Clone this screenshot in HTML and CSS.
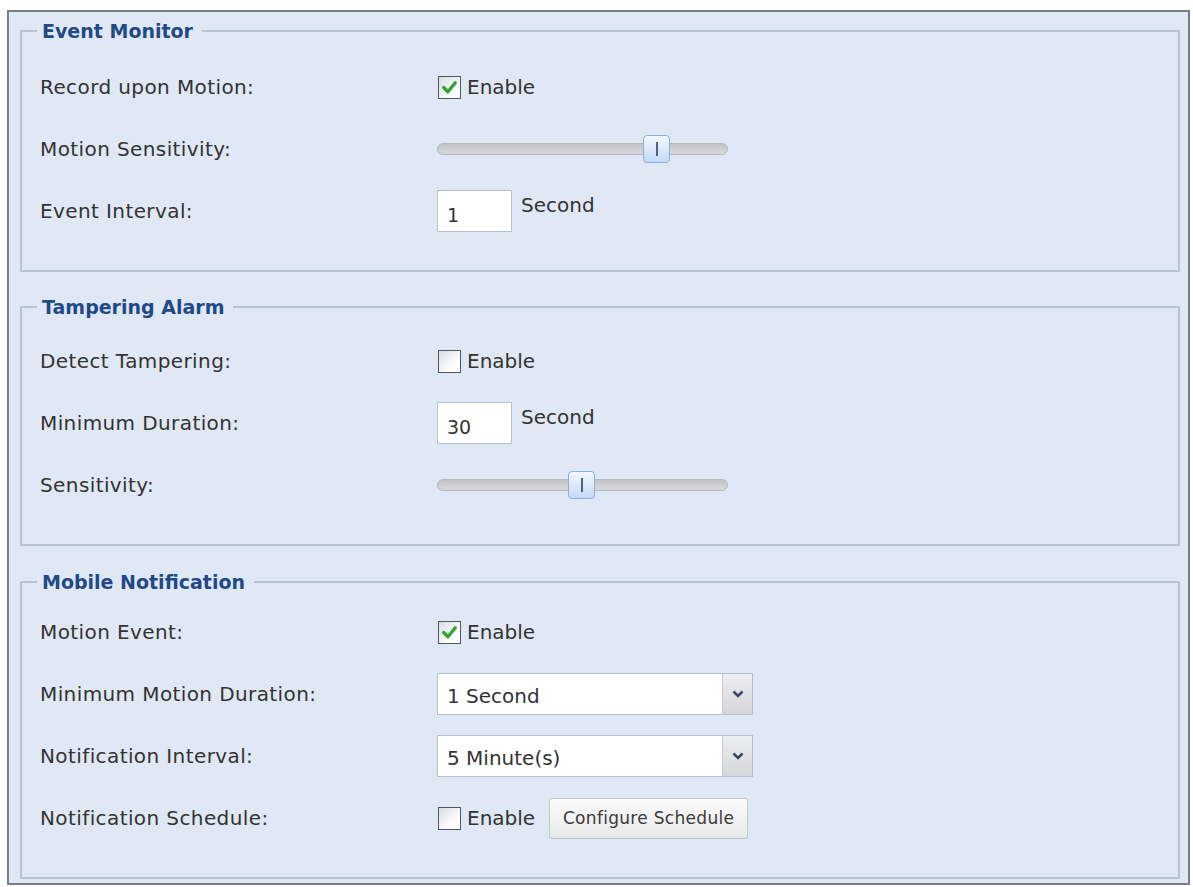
FILE: index.html
```html
<!DOCTYPE html>
<html>

<head>
    <meta charset="UTF-8" />
    <title>Event Settings</title>
    <link rel="stylesheet" href="styles.css">
</head>

<body>
    <div class="panel">
        <fieldset class="group group-event">
            <legend>Event Monitor</legend>
            <div class="row">
                <div class="label">Record upon Motion:</div>
                <div class="field">
                    <span class="check checked"><svg viewBox="0 0 20 20"><path d="M4.5 10 L8.5 14 L15.5 5.5" /></svg></span>
                    <span class="check-text">Enable</span>
                </div>
            </div>
            <div class="row">
                <div class="label">Motion Sensitivity:</div>
                <div class="field">
                    <div class="slider"><span class="thumb" style="left: 205px"></span></div>
                </div>
            </div>
            <div class="row">
                <div class="label">Event Interval:</div>
                <div class="field">
                    <div class="textbox">1</div>
                    <span class="unit">Second</span>
                </div>
            </div>
        </fieldset>

        <fieldset class="group group-tamper">
            <legend>Tampering Alarm</legend>
            <div class="row">
                <div class="label">Detect Tampering:</div>
                <div class="field">
                    <span class="check"></span>
                    <span class="check-text">Enable</span>
                </div>
            </div>
            <div class="row">
                <div class="label">Minimum Duration:</div>
                <div class="field">
                    <div class="textbox">30</div>
                    <span class="unit">Second</span>
                </div>
            </div>
            <div class="row">
                <div class="label">Sensitivity:</div>
                <div class="field">
                    <div class="slider"><span class="thumb" style="left: 130px"></span></div>
                </div>
            </div>
        </fieldset>

        <fieldset class="group group-mobile">
            <legend>Mobile Notification</legend>
            <div class="row">
                <div class="label">Motion Event:</div>
                <div class="field">
                    <span class="check checked"><svg viewBox="0 0 20 20"><path d="M4.5 10 L8.5 14 L15.5 5.5" /></svg></span>
                    <span class="check-text">Enable</span>
                </div>
            </div>
            <div class="row">
                <div class="label">Minimum Motion Duration:</div>
                <div class="field">
                    <div class="select">
                        <span class="select-value">1 Second</span>
                        <span class="select-arrow"><svg viewBox="0 0 12 8"><path d="M1.5 1.5 L6 6 L10.5 1.5" /></svg></span>
                    </div>
                </div>
            </div>
            <div class="row">
                <div class="label">Notification Interval:</div>
                <div class="field">
                    <div class="select">
                        <span class="select-value">5 Minute(s)</span>
                        <span class="select-arrow"><svg viewBox="0 0 12 8"><path d="M1.5 1.5 L6 6 L10.5 1.5" /></svg></span>
                    </div>
                </div>
            </div>
            <div class="row">
                <div class="label">Notification Schedule:</div>
                <div class="field">
                    <span class="check"></span>
                    <span class="check-text">Enable</span>
                    <button class="btn">Configure Schedule</button>
                </div>
            </div>
        </fieldset>
    </div>
</body>

</html>
```

FILE: styles.css
```css
body {
    margin: 0;
    background-color: #ffffff;
    font-family: "DejaVu Sans", Verdana, sans-serif;
    color: #333333;
}

.panel {
    margin: 10px 3px 0 7px;
    height: 863px;
    border: 2px solid #7b7d80;
    background-color: #dfe8f4;
    padding: 8px 8px 0 11px;
}

.group {
    margin: 0;
    padding: 0 0 28px 18px;
    border: 2px solid #b9c4cf;
    border-radius: 1px;
}

.group-tamper {
    margin-top: 24px;
}

.group-mobile {
    margin-top: 25px;
}

.group-event .row:first-of-type {
    margin-top: 14px;
}

.group-tamper .row:first-of-type {
    margin-top: 12px;
}

.group-mobile .row:first-of-type {
    margin-top: 8px;
}

legend {
    margin-left: -3px;
    padding: 0 9px 0 5px;
    line-height: 22px;
    font-size: 19px;
    font-weight: bold;
    color: #1f4a87;
}

.row {
    display: flex;
    align-items: center;
    height: 62px;
}

.label {
    width: 397px;
    font-size: 20px;
    letter-spacing: 0.4px;
}

.field {
    display: flex;
    align-items: center;
}

.check {
    width: 21px;
    height: 21px;
    border: 1px solid #4e5865;
    background: linear-gradient(135deg, #d8dde3, #ffffff 70%);
    margin-left: 1px;
    display: inline-flex;
}

.check svg {
    width: 21px;
    height: 21px;
}

.check svg path {
    fill: none;
    stroke: #33a332;
    stroke-width: 3.2;
    stroke-linecap: round;
    stroke-linejoin: round;
}

.check-text {
    margin-left: 6px;
    font-size: 20px;
}

.slider {
    position: relative;
    width: 289px;
    height: 10px;
    border: 1px solid #b4b8bc;
    border-radius: 6px;
    background: linear-gradient(#c2c5c8, #d8dadc);
}

.thumb {
    position: absolute;
    top: -9px;
    width: 25px;
    height: 26px;
    border: 1px solid #8eaedb;
    border-radius: 4px;
    background: linear-gradient(#f3f8ff, #c5daf6);
}

.thumb::after {
    content: "";
    position: absolute;
    left: 12px;
    top: 6px;
    width: 2px;
    height: 14px;
    background-color: #51627c;
}

.textbox {
    width: 64px;
    height: 40px;
    padding: 0 0 0 9px;
    border: 1px solid #b8c0ca;
    background-color: #ffffff;
    font-size: 19px;
    line-height: 48px;
    box-sizing: content-box;
}

.unit {
    margin-left: 9px;
    font-size: 20px;
    align-self: flex-start;
    margin-top: 3px;
}

.select {
    display: flex;
    width: 314px;
    height: 40px;
    border: 1px solid #b6bfc9;
    background-color: #ffffff;
}

.select-value {
    flex: 1;
    padding-left: 9px;
    font-size: 20px;
    line-height: 44px;
}

.select-arrow {
    width: 29px;
    border-left: 1px solid #c9ced4;
    background: linear-gradient(#eceeef, #d5d8db);
    display: flex;
    align-items: center;
    justify-content: center;
}

.select-arrow svg {
    width: 12px;
    height: 8px;
}

.select-arrow svg path {
    fill: none;
    stroke: #344a6c;
    stroke-width: 2.6;
}

.btn {
    margin-left: 14px;
    height: 41px;
    width: 199px;
    padding: 0;
    border: 1px solid #c3c7cc;
    border-radius: 3px;
    background: linear-gradient(#fbfbfb, #e8e9ea);
    font-family: "DejaVu Sans", Verdana, sans-serif;
    font-size: 17px;
    letter-spacing: 0.3px;
    color: #3a3a3a;
}
```
